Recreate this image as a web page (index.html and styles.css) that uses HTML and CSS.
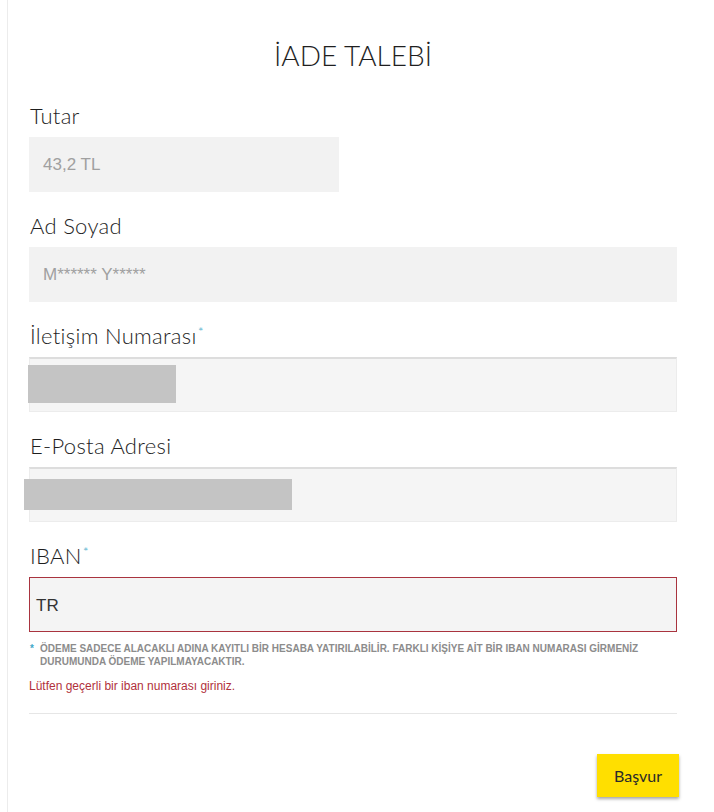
FILE: index.html
```html
<!DOCTYPE html>
<html lang="tr">
<head>
<meta charset="utf-8">
<title>İade Talebi</title>
<link rel="stylesheet" href="styles.css">
</head>
<body>
<div class="frame">
  <div class="panel">
    <h1 class="title">İADE TALEBİ</h1>
    <form class="form">
      <div class="field">
        <label class="label">Tutar</label>
        <div class="input input-short input-readonly">43,2 TL</div>
      </div>
      <div class="field">
        <label class="label">Ad Soyad</label>
        <div class="input input-readonly">M****** Y*****</div>
      </div>
      <div class="field">
        <label class="label">İletişim Numarası<span class="req">*</span></label>
        <div class="input input-edit"><span class="redact redact-phone"></span></div>
      </div>
      <div class="field">
        <label class="label">E-Posta Adresi</label>
        <div class="input input-edit"><span class="redact redact-mail"></span></div>
      </div>
      <div class="field field-last">
        <label class="label">IBAN<span class="req">*</span></label>
        <div class="input input-error">TR</div>
      </div>
      <p class="note"><span class="note-star">*</span><span class="note-text">ÖDEME SADECE ALACAKLI ADINA KAYITLI BİR HESABA YATIRILABİLİR. FARKLI KİŞİYE AİT BİR IBAN NUMARASI GİRMENİZ DURUMUNDA ÖDEME YAPILMAYACAKTIR.</span></p>
      <p class="error">Lütfen geçerli bir iban numarası giriniz.</p>
      <div class="divider"></div>
      <div class="actions">
        <button type="button" class="btn">Başvur</button>
      </div>
    </form>
  </div>
</div>
</body>
</html>
```

FILE: styles.css
```css
html, body {
  margin: 0;
  padding: 0;
  background: #ffffff;
}

.frame {
  margin-left: 7px;
  border-left: 1px solid #ececec;
  min-height: 812px;
  box-sizing: border-box;
}

.panel {
  padding: 0 37px 0 21px;
}

.title {
  margin: 0;
  padding-top: 37px;
  height: 75px;
  box-sizing: border-box;
  text-align: center;
  font-family: Lato, "Noto Sans", sans-serif;
  font-weight: 300;
  font-size: 28px;
  line-height: 36px;
  color: #1f1f1f;
}

.form {
  display: flex;
  flex-direction: column;
  margin-top: 25px;
}

.field {
  display: flex;
  flex-direction: column;
  margin-bottom: 18px;
}

.field-last {
  margin-bottom: 0;
}

.label {
  display: block;
  font-family: Lato, "Noto Sans", sans-serif;
  font-weight: 300;
  font-size: 22px;
  line-height: 24px;
  letter-spacing: 0.3px;
  color: #1e1e1e;
  height: 33px;
  padding-top: 4px;
  padding-left: 1px;
}

.req {
  color: #3fa9c9;
  font-size: 14px;
  vertical-align: top;
  line-height: 16px;
  margin-left: 1px;
}

.input {
  position: relative;
  height: 55px;
  box-sizing: border-box;
  display: flex;
  align-items: center;
  font-family: "Liberation Sans", Arial, sans-serif;
  font-size: 17px;
}

.input-short {
  width: 310px;
}

.input-readonly {
  background: #f2f2f2;
  color: #a0a0a0;
  padding-left: 14px;
}

.input-edit {
  background: #f5f5f5;
  border-top: 2px solid #dddddd;
  border-left: 1px solid #ececec;
  border-right: 1px solid #ececec;
  border-bottom: 1px solid #ececec;
}

.input-error {
  background: #f4f4f4;
  border: 1px solid #a9343f;
  color: #333333;
  padding-left: 6px;
  padding-top: 2px;
  font-size: 17px;
}

.redact {
  position: absolute;
  background: #c4c4c4;
}

.redact-phone {
  left: -2px;
  top: 6px;
  width: 148px;
  height: 38px;
}

.redact-mail {
  left: -6px;
  top: 10px;
  width: 268px;
  height: 31px;
}

.note {
  margin: 10px 0 0 0;
  display: flex;
  font-family: "Liberation Sans", Arial, sans-serif;
  font-size: 10px;
  font-weight: 700;
  line-height: 13px;
  color: #8c8c8c;
}

.note-star {
  color: #3fa9c9;
  width: 10px;
  flex: 0 0 10px;
  padding-left: 1px;
}

.note-text {
  max-width: 612px;
}

.error {
  margin: 10px 0 0 0;
  font-family: "Liberation Sans", Arial, sans-serif;
  font-size: 12px;
  line-height: 16px;
  color: #b1313c;
}

.divider {
  margin-top: 19px;
  height: 1px;
  background: #e6e6e6;
}

.actions {
  display: flex;
  justify-content: flex-end;
  margin-top: 40px;
}

.btn {
  width: 82px;
  height: 43px;
  border: none;
  background: #ffdf00;
  color: #2a2a2a;
  font-family: Lato, "Noto Sans", sans-serif;
  font-size: 16px;
  box-shadow: 0 2px 3px rgba(0, 0, 0, 0.35);
  cursor: pointer;
  margin-right: -2px;
}
```
